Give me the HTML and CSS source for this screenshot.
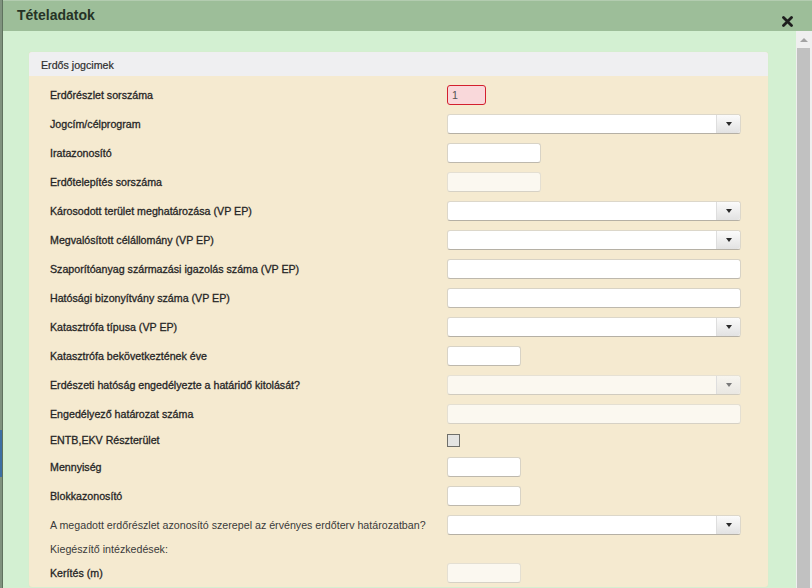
FILE: index.html
```html
<!DOCTYPE html>
<html lang="hu">
<head>
    <meta charset="UTF-8">
    <title>Tételadatok</title>
    <link rel="stylesheet" href="styles.css">
</head>
<body>
    <div class="page-edge"></div>
    <div class="dialog">
        <div class="dialog-header">
            <span class="dialog-title">Tételadatok</span>
            <span class="dialog-close">
                <svg width="11" height="11" viewBox="0 0 11 11">
                    <path d="M1.5 1.5 L9.5 9.5 M9.5 1.5 L1.5 9.5" stroke="#1e1e1e" stroke-width="2.8" stroke-linecap="round"/>
                </svg>
            </span>
        </div>
        <div class="dialog-body">
            <div class="content">
                <div class="panel">
                    <div class="panel-header">Erdős jogcimek</div>
                    <div class="panel-body">
                        <div class="row">
                            <label>Erdőrészlet sorszáma</label>
                            <div class="input input-error">1</div>
                        </div>
                        <div class="row">
                            <label>Jogcím/célprogram</label>
                            <div class="select"><span class="select-arrow"></span></div>
                        </div>
                        <div class="row">
                            <label>Iratazonosító</label>
                            <div class="input small"></div>
                        </div>
                        <div class="row">
                            <label>Erdőtelepítés sorszáma</label>
                            <div class="input small disabled"></div>
                        </div>
                        <div class="row">
                            <label>Károsodott terület meghatározása (VP EP)</label>
                            <div class="select"><span class="select-arrow"></span></div>
                        </div>
                        <div class="row">
                            <label>Megvalósított célállomány (VP EP)</label>
                            <div class="select"><span class="select-arrow"></span></div>
                        </div>
                        <div class="row">
                            <label>Szaporítóanyag származási igazolás száma (VP EP)</label>
                            <div class="input full"></div>
                        </div>
                        <div class="row">
                            <label>Hatósági bizonyítvány száma (VP EP)</label>
                            <div class="input full"></div>
                        </div>
                        <div class="row">
                            <label>Katasztrófa típusa (VP EP)</label>
                            <div class="select"><span class="select-arrow"></span></div>
                        </div>
                        <div class="row">
                            <label>Katasztrófa bekövetkeztének éve</label>
                            <div class="input tiny"></div>
                        </div>
                        <div class="row">
                            <label>Erdészeti hatóság engedélyezte a határidő kitolását?</label>
                            <div class="select disabled"><span class="select-arrow"></span></div>
                        </div>
                        <div class="row">
                            <label>Engedélyező határozat száma</label>
                            <div class="input full disabled"></div>
                        </div>
                        <div class="row row-check">
                            <label>ENTB,EKV Részterület</label>
                            <span class="checkbox"></span>
                        </div>
                        <div class="row">
                            <label>Mennyiség</label>
                            <div class="input tiny"></div>
                        </div>
                        <div class="row">
                            <label>Blokkazonosító</label>
                            <div class="input tiny"></div>
                        </div>
                        <div class="row">
                            <label class="plain">A megadott erdőrészlet azonosító szerepel az érvényes erdőterv határozatban?</label>
                            <div class="select"><span class="select-arrow"></span></div>
                        </div>
                        <div class="row row-text">
                            <label class="plain">Kiegészítő intézkedések:</label>
                        </div>
                        <div class="row">
                            <label>Kerítés (m)</label>
                            <div class="input tiny disabled"></div>
                        </div>
                    </div>
                </div>
            </div>
            <div class="scrollbar">
                <div class="scroll-up"></div>
                <div class="scroll-thumb"></div>
            </div>
        </div>
    </div>
</body>
</html>
```

FILE: styles.css
```css
/* Alap */
body {
    margin: 0;
    height: 588px;
    overflow: hidden;
    display: flex;
    font-family: 'Liberation Sans', Arial, sans-serif;
    color: #2b2b2b;
}

.page-edge {
    width: 3px;
    background: linear-gradient(to bottom, #7f927e 0, #7f927e 430px, #3d6fa3 430px, #3d6fa3 477px, #7f927e 477px);
    border-right: 1px solid #5f725e;
    box-sizing: border-box;
}

/* Dialógus */
.dialog {
    flex: 1;
    display: flex;
    flex-direction: column;
}

.dialog-header {
    height: 31px;
    box-sizing: border-box;
    background: #9dbe99;
    border-top: 1px solid #b3ccb0;
    display: flex;
    justify-content: space-between;
    padding: 0 19px 0 14px;
}

.dialog-title {
    font-size: 14px;
    font-weight: bold;
    color: #263326;
    line-height: 28px;
}

.dialog-close {
    display: flex;
    align-items: flex-end;
    padding-bottom: 4px;
}

.dialog-body {
    flex: 1;
    display: flex;
    min-height: 0;
}

.content {
    flex: 1;
    background: #d3f0d2;
    padding: 21px 28px 0 26px;
    overflow: hidden;
}

/* Panel */
.panel {
    background: #f5ead0;
    border-radius: 3px;
    box-shadow: 0 0 1px #e6d9b8;
}

.panel-header {
    height: 24px;
    line-height: 26px;
    padding-left: 12px;
    background: #efeff1;
    border-radius: 3px 3px 0 0;
    font-size: 8pt;
    color: #2e2e2e;
    -webkit-text-stroke: 0.2px #2e2e2e;
}

.panel-body {
    padding: 4px 0 0 21px;
}

.row {
    display: flex;
    align-items: center;
    height: 29px;
}

.row-check {
    height: 24px;
}

.row-text {
    height: 19px;
}

.row label {
    width: 397px;
    flex: none;
    font-size: 8pt;
    color: #262626;
    -webkit-text-stroke: 0.3px #262626;
}

.row label.plain {
    color: #3a3a3a;
    -webkit-text-stroke: 0;
}

/* Mezők */
.input {
    height: 20px;
    box-sizing: border-box;
    background: #ffffff;
    border: 1px solid #d8d3c6;
    border-bottom-color: #bdb8ad;
    border-radius: 3px;
    font-size: 8pt;
    line-height: 18px;
    padding-left: 4px;
    color: #555;
}

.input-error {
    width: 39px;
    background: #f9d8da;
    border: 1px solid #d3202e;
}

.input.small {
    width: 94px;
}

.input.tiny {
    width: 74px;
}

.input.full {
    width: 294px;
}

.input.disabled {
    background: #fbf8f0;
    border-color: #e4dfd2;
    border-bottom-color: #d6d1c5;
}

.select {
    width: 294px;
    height: 20px;
    box-sizing: border-box;
    background: #ffffff;
    border: 1px solid #dcd7ca;
    border-bottom-color: #b5b0a5;
    border-radius: 3px;
    display: flex;
    justify-content: flex-end;
}

.select-arrow {
    width: 23px;
    background: linear-gradient(to bottom, #fbfbfb, #e2e2e2);
    border-left: 1px solid #dedede;
    border-radius: 0 3px 3px 0;
    display: flex;
    align-items: center;
    justify-content: center;
}

.select-arrow::after {
    content: "";
    border-left: 3.5px solid transparent;
    border-right: 3.5px solid transparent;
    border-top: 4px solid #2a2a2a;
}

.select.disabled {
    background: #fbf8f0;
    border-color: #e6e1d4;
    border-bottom-color: #d0cbbf;
}

.select.disabled .select-arrow {
    background: linear-gradient(to bottom, #f7f5ef, #e9e7e2);
}

.select.disabled .select-arrow::after {
    border-top-color: #7a7a7a;
}

.checkbox {
    width: 13px;
    height: 13px;
    box-sizing: border-box;
    background: #e4e4e2;
    border: 1px solid #6f6f6a;
}

/* Görgetősáv */
.scrollbar {
    width: 16px;
    background: #efefef;
    display: flex;
    flex-direction: column;
}

.scroll-up {
    height: 17px;
    display: flex;
    align-items: center;
    justify-content: center;
}

.scroll-up::after {
    content: "";
    border-left: 4px solid transparent;
    border-right: 4px solid transparent;
    border-bottom: 4px solid #a3a3a3;
}

.scroll-thumb {
    flex: 1;
    margin: 0 2px 0 1px;
    background: #c1c1c1;
}
```
